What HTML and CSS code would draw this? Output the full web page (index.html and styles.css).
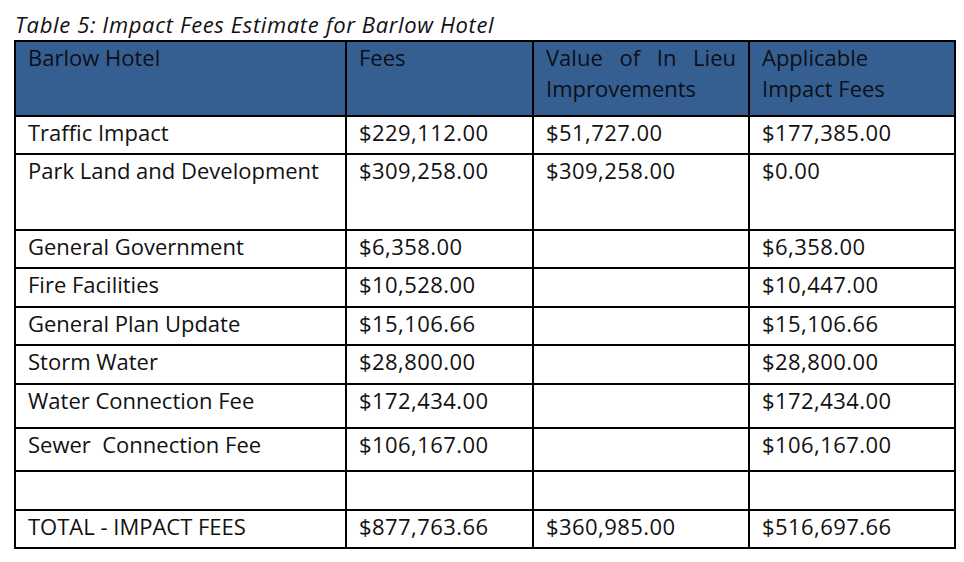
FILE: index.html
```html
<!DOCTYPE html>
<html>
<head>
<meta charset="utf-8">
<link rel="stylesheet" href="styles.css">
</head>
<body>
<div class="page">
  <p class="caption">Table 5: Impact Fees Estimate for Barlow Hotel</p>
  <table class="fees">
    <colgroup>
      <col class="c1"><col class="c2"><col class="c3"><col class="c4">
    </colgroup>
    <thead>
      <tr class="head">
        <th>Barlow Hotel</th>
        <th>Fees</th>
        <th class="justify">Value of In Lieu Improvements</th>
        <th>Applicable<br>Impact Fees</th>
      </tr>
    </thead>
    <tbody>
      <tr class="h38"><td>Traffic Impact</td><td>$229,112.00</td><td>$51,727.00</td><td>$177,385.00</td></tr>
      <tr class="h76"><td>Park Land and Development</td><td>$309,258.00</td><td>$309,258.00</td><td>$0.00</td></tr>
      <tr class="h38"><td>General Government</td><td>$6,358.00</td><td></td><td>$6,358.00</td></tr>
      <tr class="h39"><td>Fire Facilities</td><td>$10,528.00</td><td></td><td>$10,447.00</td></tr>
      <tr class="h38"><td>General Plan Update</td><td>$15,106.66</td><td></td><td>$15,106.66</td></tr>
      <tr class="h39"><td>Storm Water</td><td>$28,800.00</td><td></td><td>$28,800.00</td></tr>
      <tr class="h44"><td>Water Connection Fee</td><td>$172,434.00</td><td></td><td>$172,434.00</td></tr>
      <tr class="h43"><td>Sewer&nbsp; Connection Fee</td><td>$106,167.00</td><td></td><td>$106,167.00</td></tr>
      <tr class="h39"><td></td><td></td><td></td><td></td></tr>
      <tr class="h38"><td>TOTAL - IMPACT FEES</td><td>$877,763.66</td><td>$360,985.00</td><td>$516,697.66</td></tr>
    </tbody>
  </table>
</div>
</body>
</html>
```
FILE: styles.css
```css
html, body {
  margin: 0;
  padding: 0;
  background: #ffffff;
}
body {
  font-family: "Open Sans", "Lato", sans-serif;
  color: #111111;
}
.page {
  padding: 11px 0 0 14px;
}
.caption {
  margin: 0 0 3px 1px;
  font-style: italic;
  font-size: 22px;
  line-height: 26px;
  font-weight: 400;
  letter-spacing: 0.63px;
  color: #111111;
}
.fees {
  border-collapse: collapse;
  width: 940px;
  table-layout: fixed;
}
.c1 { width: 331px; }
.c2 { width: 187px; }
.c3 { width: 216px; }
.c4 { width: 206px; }
.fees th, .fees td {
  border: 2px solid #000000;
  padding: 0 12px 0 12px;
  vertical-align: top;
  text-align: left;
  font-weight: 400;
  font-size: 22px;
  letter-spacing: 0;
  line-height: 31px;
}
.fees tbody td + td {
  letter-spacing: 0.45px;
}
.head { height: 75px; }
.head th {
  background: #365f91;
  color: #0b0f1a;
}
.head th.justify {
  text-align: justify;
  padding-right: 12px;
}
.h38 { height: 38px; }
.h39 { height: 39px; }
.h43 { height: 43px; }
.h44 { height: 44px; }
.h76 { height: 76px; }
```
